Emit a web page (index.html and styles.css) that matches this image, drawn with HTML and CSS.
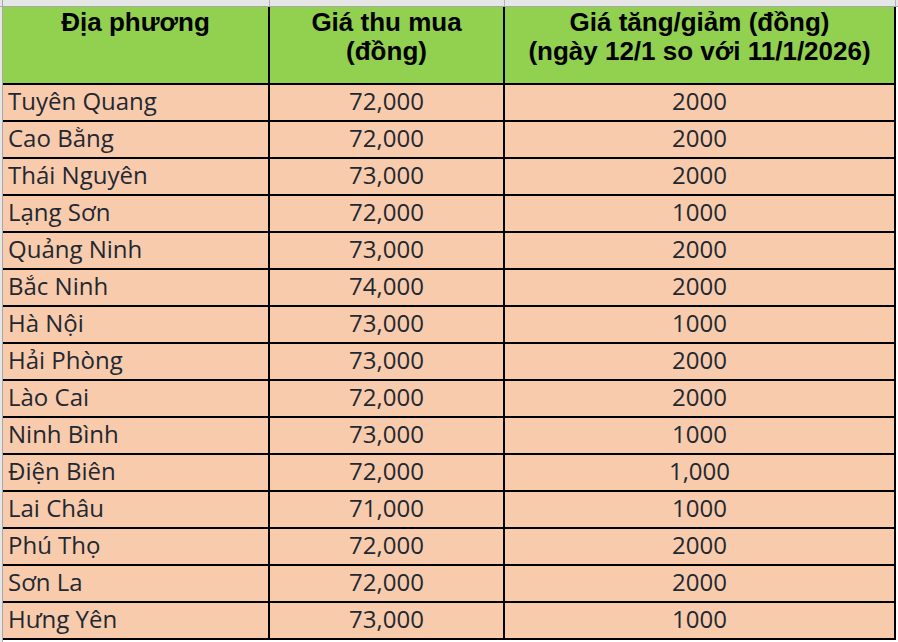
FILE: index.html
```html
<!DOCTYPE html>
<html lang="vi">
<head>
<meta charset="utf-8">
<title>Giá thu mua</title>
<link rel="stylesheet" href="styles.css">
</head>
<body>
<div class="sheet">
  <div class="strip">
    <div class="strip-gutter"></div>
    <div class="strip-cell c1"></div>
    <div class="strip-cell c2"></div>
    <div class="strip-cell c3"></div>
  </div>
  <div class="main">
    <div class="gutter"></div>
    <div class="grid" role="table">
      <div class="cell head" role="columnheader">Địa phương</div>
      <div class="cell head" role="columnheader">Giá thu mua<br>(đồng)</div>
      <div class="cell head" role="columnheader">Giá tăng/giảm (đồng)<br>(ngày 12/1 so với 11/1/2026)</div>

      <div class="cell name">Tuyên Quang</div><div class="cell num">72,000</div><div class="cell num">2000</div>
      <div class="cell name">Cao Bằng</div><div class="cell num">72,000</div><div class="cell num">2000</div>
      <div class="cell name">Thái Nguyên</div><div class="cell num">73,000</div><div class="cell num">2000</div>
      <div class="cell name">Lạng Sơn</div><div class="cell num">72,000</div><div class="cell num">1000</div>
      <div class="cell name">Quảng Ninh</div><div class="cell num">73,000</div><div class="cell num">2000</div>
      <div class="cell name">Bắc Ninh</div><div class="cell num">74,000</div><div class="cell num">2000</div>
      <div class="cell name">Hà Nội</div><div class="cell num">73,000</div><div class="cell num">1000</div>
      <div class="cell name">Hải Phòng</div><div class="cell num">73,000</div><div class="cell num">2000</div>
      <div class="cell name">Lào Cai</div><div class="cell num">72,000</div><div class="cell num">2000</div>
      <div class="cell name">Ninh Bình</div><div class="cell num">73,000</div><div class="cell num">1000</div>
      <div class="cell name">Điện Biên</div><div class="cell num">72,000</div><div class="cell num">1,000</div>
      <div class="cell name">Lai Châu</div><div class="cell num">71,000</div><div class="cell num">1000</div>
      <div class="cell name">Phú Thọ</div><div class="cell num">72,000</div><div class="cell num">2000</div>
      <div class="cell name">Sơn La</div><div class="cell num">72,000</div><div class="cell num">2000</div>
      <div class="cell name">Hưng Yên</div><div class="cell num">73,000</div><div class="cell num">1000</div>
    </div>
  </div>
</div>
</body>
</html>
```

FILE: styles.css
```css
* { box-sizing: border-box; }

html, body {
  margin: 0;
  padding: 0;
  background: #ffffff;
}

.sheet {
  width: 898px;
  height: 642px;
  overflow: hidden;
}

.strip {
  display: flex;
  height: 7px;
  background: #e6e6e6;
  border-bottom: 1px solid #a8a8a8;
}

.strip-gutter {
  width: 3px;
  border-right: 1px solid #a8a8a8;
}

.strip-cell {
  border-right: 1px solid #b4b4b4;
}

.strip-cell.c1 { width: 267px; }
.strip-cell.c2 { width: 235px; }
.strip-cell.c3 { width: 391px; }

.main {
  display: flex;
  align-items: stretch;
  height: 635px;
}

.gutter {
  width: 3px;
  flex: none;
  background: #e6e6e6;
  border-right: 1px solid #a8a8a8;
}

.grid {
  display: grid;
  grid-template-columns: 267px 235px 391px;
  grid-auto-rows: 37px;
  grid-template-rows: 78px;
  align-content: start;
}

.cell {
  border-right: 2px solid #000;
  border-bottom: 2px solid #000;
  background: #f8cbad;
  color: #222831;
  font-family: "Open Sans", "Noto Sans", sans-serif;
  font-size: 24px;
  line-height: 31px;
  white-space: nowrap;
}

.head {
  background: #92d050;
  color: #000;
  font-family: "Liberation Sans", Arial, sans-serif;
  font-weight: bold;
  font-size: 26px;
  line-height: 29px;
  text-align: center;
  padding-top: 1px;
}

.name {
  padding-left: 5px;
}

.num {
  text-align: center;
}
```
